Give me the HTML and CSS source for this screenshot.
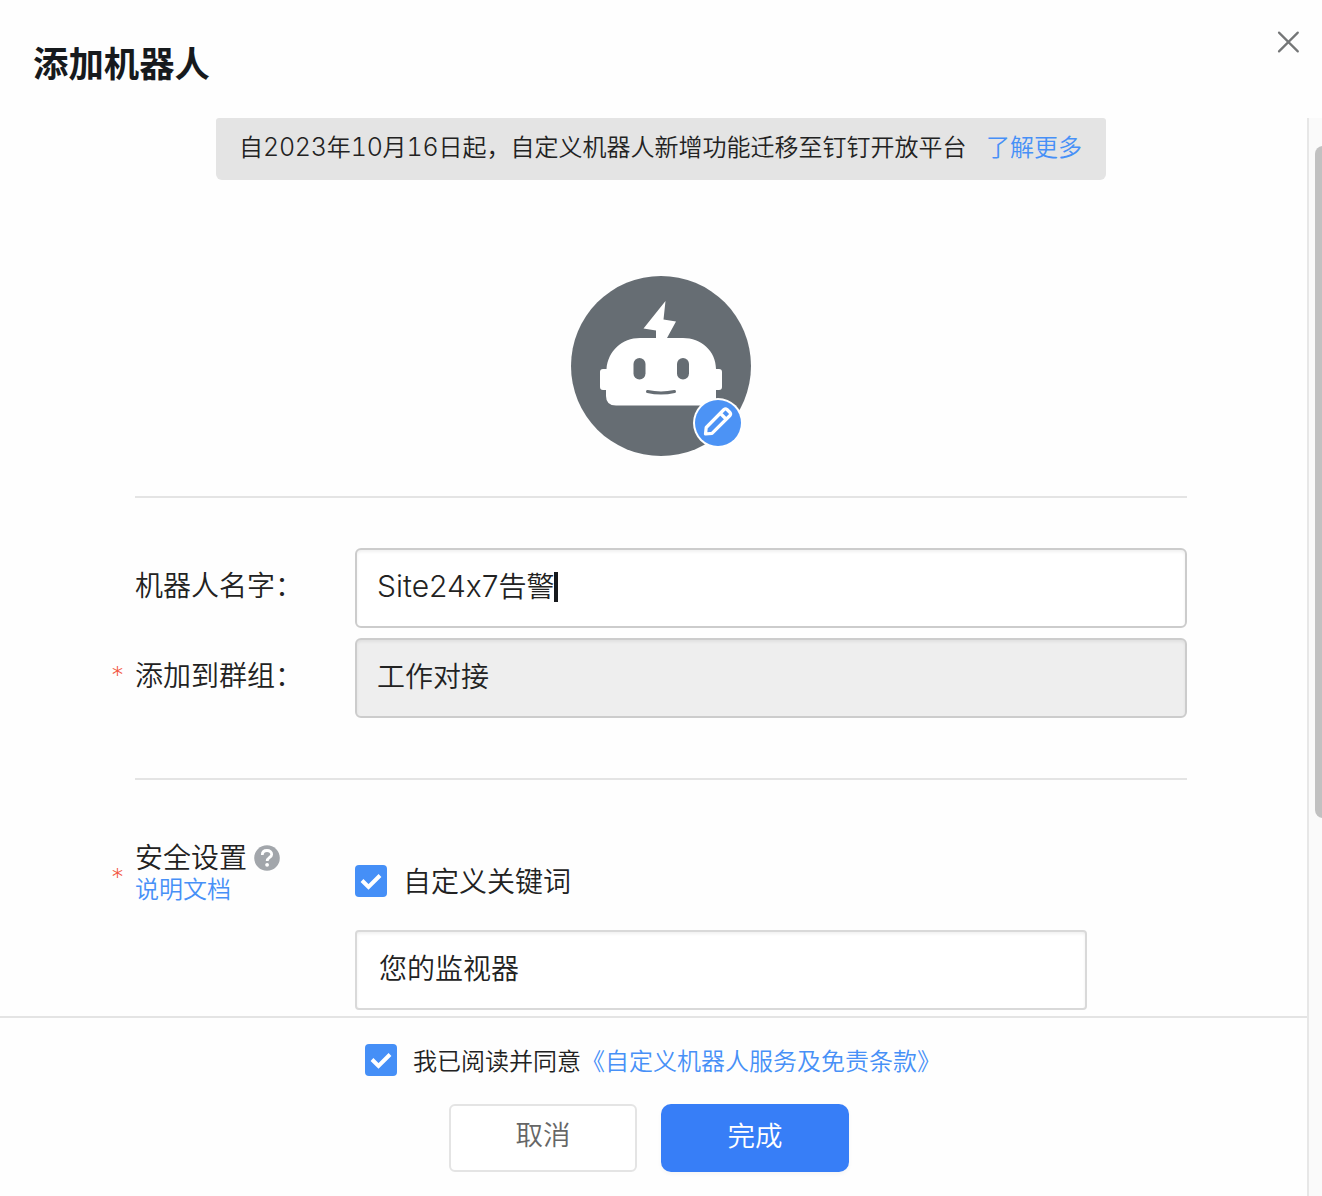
FILE: index.html
```html
<!DOCTYPE html>
<html lang="zh-CN">
<head>
<meta charset="utf-8">
<title>添加机器人</title>
<link rel="stylesheet" href="styles.css">
</head>
<body>
<div class="dialog">
  <header class="header">
    <h1 class="title">添加机器人</h1>
    <svg class="close" viewBox="0 0 24 24" width="24" height="24"><path d="M3 2.600 21.800 21.400M21.800 2.600 3 21.400"/></svg>
  </header>
  <div class="body">
    <div class="main">
      <div class="content">
        <div class="banner">
          <span>自<span class="num">2023</span>年<span class="num">10</span>月<span class="num">16</span>日起，自定义机器人新增功能迁移至钉钉开放平台</span>
          <a class="link">了解更多</a>
        </div>
        <div class="avatar">
          <svg viewBox="0 0 180 180" width="180" height="180">
            <circle cx="90" cy="90" r="90" fill="#666d73"/>
            <path fill="#fff" d="M94.500 25 92.500 43.500 105 45.500 96 62H112C130 62 145 75 145 93H148Q151 93 151 96V111Q151 114 148 114H145V129.500H45Q35 129.500 35 120V114H32Q29 114 29 111V96Q29 93 32 93H35.500C37 75 51 62 69 62H85V54.500L72.500 52.500Z"/>
            <rect x="62.500" y="82" width="12" height="21.500" rx="6" fill="#666d73"/>
            <rect x="106" y="82" width="12" height="21.500" rx="6" fill="#666d73"/>
            <path d="M76.500 115.500Q90 118.500 103.500 115.500" fill="none" stroke="#666d73" stroke-width="3" stroke-linecap="round"/>
          </svg>
          <svg class="edit" viewBox="0 0 50 50" width="50" height="50">
            <circle cx="25" cy="25" r="25" fill="#fff"/>
            <circle cx="25" cy="25" r="23" fill="#4c93f5"/>
            <path d="M12.500 36 13.200 29.500 31 11.500Q32.500 10.200 34 11.500L37 14.500Q38.200 16 37 17.500L19 35.300ZM27.500 15.500 33.500 21.500" fill="none" stroke="#fff" stroke-width="3.200" stroke-linejoin="round"/>
          </svg>
        </div>
        <div class="form">
          <div class="row">
            <span class="star"></span><label class="label">机器人名字：</label>
            <div class="field"><span class="latin">Site24x7</span>告警<i class="caret"></i></div>
          </div>
          <div class="row">
            <span class="star">*</span><label class="label">添加到群组：</label>
            <div class="field disabled">工作对接</div>
          </div>
        </div>
        <div class="security row">
          <span class="star">*</span>
          <div class="label">
            <div class="caption">安全设置
              <svg viewBox="0 0 26 26" width="26" height="26"><circle cx="13" cy="13" r="12.800" fill="#a2a6ab"/><path d="M8.300 10C8.300 7 10.300 5.500 13 5.500S17.700 7.200 17.700 9.600C17.700 12.400 13.200 12.600 13.200 16" fill="none" stroke="#fff" stroke-width="2.800"/><circle cx="13.100" cy="19.800" r="1.900" fill="#fff"/></svg>
            </div>
            <a class="link">说明文档</a>
          </div>
          <div class="options">
            <div class="option"><span class="check"><svg viewBox="0 0 32 32" width="32" height="32"><path d="M7 15.500 13.500 22 25 10.500"/></svg></span><span class="name">自定义关键词</span></div>
            <div class="field keyword">您的监视器</div>
          </div>
        </div>
      </div>
      <footer class="footer">
        <div class="agree"><span class="check"><svg viewBox="0 0 32 32" width="32" height="32"><path d="M7 15.500 13.500 22 25 10.500"/></svg></span><span class="terms">我已阅读并同意<a class="link">《自定义机器人服务及免责条款》</a></span></div>
        <div class="actions"><button class="btn">取消</button><button class="btn primary">完成</button></div>
      </footer>
    </div>
    <div class="scrollbar"><div class="thumb"></div></div>
  </div>
</div>
</body>
</html>
```
FILE: styles.css
```css
* { box-sizing: border-box; }
body { margin: 0; background: #fefefe; color: #222; font: 350 28px/40px "Noto Sans CJK SC", sans-serif; }
.dialog { display: flex; flex-direction: column; height: 1196px; overflow: hidden; }
.header { display: flex; justify-content: space-between; height: 118px; padding: 30px 22px 0 33px; }
.title { margin: 7px 0 0; color: #171a1d; font-size: 35.4px; line-height: 50px; font-weight: 700; }
.close { fill: none; stroke: #747677; stroke-width: 2.2; stroke-linecap: round; }
.link { color: #4790f7; }
.body { display: flex; flex: 1; min-height: 0; }
.main { display: flex; flex-direction: column; width: 1307px; }
.content { height: 898px; padding: 0 120px 0 135px; overflow: hidden; }
.banner { display: flex; justify-content: space-between; width: 890px; height: 62px; margin-left: 81px; padding: 0 24px 0 23px; background: #e4e4e4; border-radius: 3px 3px 6px 6px; font-size: 24px; line-height: 56px; white-space: nowrap; }
.num { font-family: Inter, sans-serif; font-size: 25px; font-weight: 300; line-height: 1; font-variant-numeric: tabular-nums; letter-spacing: -.25px; }
.avatar { position: relative; width: 180px; height: 180px; margin: 96px 0 40px 436px; }
.avatar svg { display: block; }
.avatar .edit { position: absolute; left: 122px; top: 122px; }
.form { display: flex; flex-direction: column; gap: 10px; height: 284px; padding-top: 50px; border-top: 2px solid #e4e4e4; border-bottom: 2px solid #e4e4e4; }
.row { display: grid; grid-template-columns: 24px 220px 1fr; margin-left: -24px; }
.star { padding-top: 18px; color: #f25643; font-family: Inter, sans-serif; font-size: 26px; font-weight: 200; }
.label { padding-top: 16px; white-space: nowrap; }
.field { display: flex; align-items: center; height: 80px; padding: 0 20px 6px; background: #fff; border: 2px solid #ccc; border-radius: 6px; box-shadow: inset 0 2px 3px #0000000f; }
.disabled { background: #eee; }
.latin { padding-top: 2px; font-family: Inter, sans-serif; font-size: 30px; font-weight: 300; font-feature-settings: "calt" 0; }
.caret { width: 4px; height: 30px; margin: 4px 0 0 -1px; background: #171a1d; }
.security { padding-top: 50px; }
.security .star { padding-top: 28px; }
.security .label { padding-top: 6px; }
.caption { display: flex; align-items: center; gap: 7px; height: 40px; }
.caption svg { margin-top: 3px; }
.security .label .link { display: block; font-size: 24px; line-height: 24px; }
.option { display: flex; align-items: center; gap: 16px; height: 32px; margin: 35px 0 33px; }
.name { padding-bottom: 3px; }
.check { width: 32px; height: 32px; background: #458ff7; border-radius: 4px; }
.check svg { display: block; fill: none; stroke: #fff; stroke-width: 4; }
.keyword { width: 732px; padding-left: 22px; border-color: #d9d9d9; border-radius: 4px; }
.footer { height: 180px; border-top: 2px solid #e4e4e4; padding-top: 26px; }
.agree { display: flex; align-items: center; gap: 16px; height: 32px; margin-left: 365px; font-size: 24px; white-space: nowrap; }
.actions { display: flex; gap: 24px; margin: 28px 0 0 449px; }
.btn { width: 188px; height: 68px; padding: 0 0 10px; border: 2px solid #e4e4e4; border-radius: 6px; background: #fff; color: #666; font: inherit; font-size: 27.5px; }
.primary { padding-bottom: 8px; border: 0; border-radius: 10px; background: #377ef7; color: #fff; box-shadow: 0 2px 4px #0000000a; }
.scrollbar { width: 15px; padding-top: 28px; border-left: 2px solid #e7e7e7; background: #fafafa; }
.thumb { width: 16px; height: 672px; margin-left: 6px; background: #c1c1c1; border-radius: 8px; }
```
